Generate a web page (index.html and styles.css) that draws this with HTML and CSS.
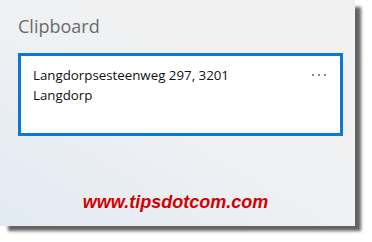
FILE: index.html
```html
<!DOCTYPE html>
<html>
<head>
<meta charset="utf-8">
<link rel="stylesheet" href="styles.css">
</head>
<body>
<div class="panel">
  <div class="title">Clipboard</div>
  <div class="card">
    <div class="card-text">Langdorpsesteenweg 297, 3201<br>Langdorp</div>
    <div class="more"><span></span><span></span><span></span></div>
  </div>
  <div class="site">www.tipsdotcom.com</div>
</div>
</body>
</html>
```
FILE: styles.css
```css
html, body {
  margin: 0;
  padding: 0;
  background: #ffffff;
}
body {
  width: 372px;
  height: 242px;
  overflow: hidden;
}
.panel {
  width: 355px;
  height: 226px;
  box-sizing: border-box;
  padding: 14px 12px 0 18px;
  background: linear-gradient(30deg, #e2eaf3 0%, #eef0f3 45%, #f1f1f1 70%);
  box-shadow: 7px 6px 3px -1px rgba(60, 60, 60, 0.8);
  display: flex;
  flex-direction: column;
}
.title {
  font-family: "Open Sans", sans-serif;
  font-size: 18px;
  color: #6b6b6b;
  line-height: 24px;
}
.card {
  margin-top: 15px;
  width: 325px;
  height: 83px;
  box-sizing: border-box;
  border: 3px solid #0a78d7;
  background: #ffffff;
  display: flex;
  justify-content: space-between;
  padding: 9px 14px 0 12px;
}
.card-text {
  font-family: "Open Sans", sans-serif;
  font-size: 13.3px;
  line-height: 20px;
  color: #111;
}
.more {
  display: flex;
  gap: 4px;
  padding-top: 9px;
}
.more span {
  width: 2px;
  height: 2px;
  background: #8a8a8a;
}
.site {
  margin-top: 56px;
  text-align: center;
  padding-right: 10px;
  font-family: "Liberation Sans", Arial, sans-serif;
  font-weight: bold;
  font-style: italic;
  font-size: 18px;
  color: #d40000;
}
```
